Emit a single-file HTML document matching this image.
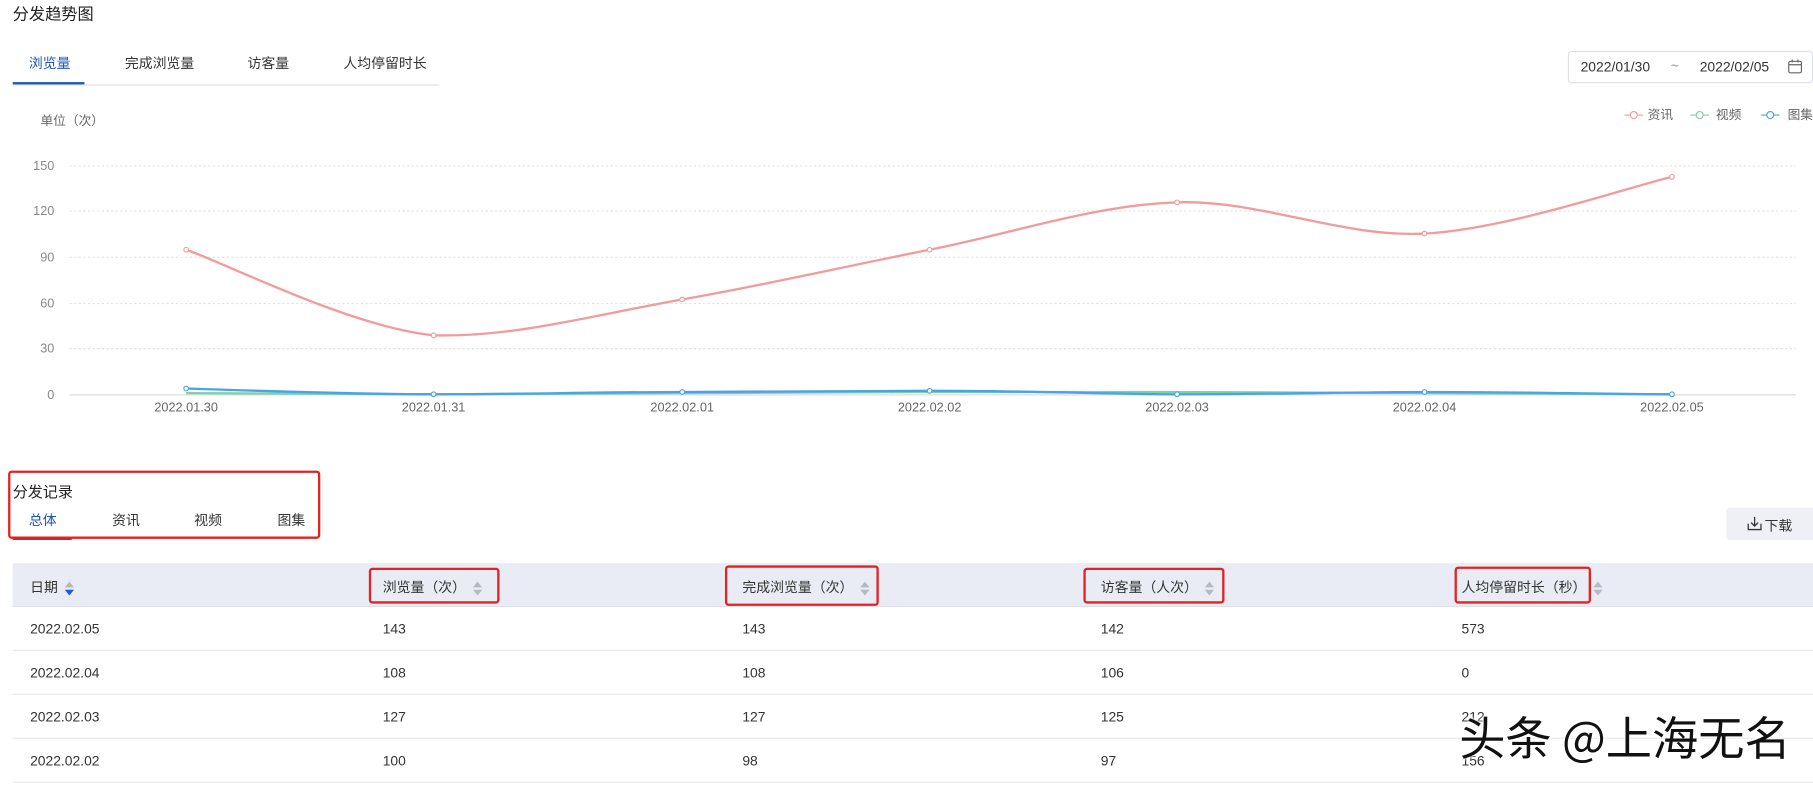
<!DOCTYPE html>
<html><head><meta charset="utf-8">
<style>
*{margin:0;padding:0;box-sizing:border-box}
html,body{width:1813px;height:786px;overflow:hidden;background:#fff}
body{font-family:"Liberation Sans","Noto Sans CJK SC",sans-serif;color:#333}
#w{position:absolute;left:0;top:0;width:1568px;height:680px;transform:scale(1.15625);transform-origin:0 0}
.a{position:absolute;white-space:nowrap}
.t{font-size:12px;color:#333}
.rb{position:absolute;border:2px solid #e52222;border-radius:3px}
.sort{display:inline-block;width:8px;height:12px;vertical-align:middle;margin-left:6px;position:relative}
.sort:before{content:"";position:absolute;left:0;top:0;border:4px solid transparent;border-bottom:5px solid #b5b9c2;border-top:0}
.sort:after{content:"";position:absolute;left:0;top:7px;border:4px solid transparent;border-top:5px solid #b5b9c2;border-bottom:0}
.sort.on:after{border-top-color:#1f5bd6}
.row{position:absolute;left:11px;width:1557px;height:38px;border-bottom:1px solid #e8e8e8}
.row span{position:absolute;top:12px;font-size:12px;color:#333}
</style></head><body>
<div id="w">
<div class="a" style="left:11px;top:2px;font-size:14px;color:#222">分发趋势图</div>
<div class="a t" style="left:25px;top:46px;color:#1f56b8">浏览量</div>
<div class="a t" style="left:108px;top:46px">完成浏览量</div>
<div class="a t" style="left:214px;top:46px">访客量</div>
<div class="a t" style="left:297px;top:46px">人均停留时长</div>
<div class="a" style="left:11px;top:73px;width:369px;height:1px;background:#dcdfe6"></div>
<div class="a" style="left:11px;top:71px;width:62px;height:2px;background:#1f56b8"></div>

<div class="a" style="left:1356px;top:44px;width:212px;height:28px;border:1px solid #dcdfe6;border-radius:3px"></div>
<div class="a t" style="left:1367px;top:51px">2022/01/30</div>
<div class="a" style="left:1445px;top:50px;font-size:12px;color:#999">~</div>
<div class="a t" style="left:1470px;top:51px">2022/02/05</div>
<svg class="a" style="left:1546px;top:51px" width="13" height="13" viewBox="0 0 13 13"><rect x="1" y="2" width="11" height="10" rx="1.5" fill="none" stroke="#666"/><line x1="1" y1="5" x2="12" y2="5" stroke="#666"/><line x1="4" y1="0.5" x2="4" y2="3" stroke="#666"/><line x1="9" y1="0.5" x2="9" y2="3" stroke="#666"/></svg>

<svg class="a" style="left:0;top:80px" width="1568" height="300" viewBox="0 80 1568 300">
<g stroke="#e3e3e3" stroke-dasharray="2,2" stroke-width="1">
<line x1="60" y1="143.5" x2="1553" y2="143.5"/><line x1="60" y1="182.5" x2="1553" y2="182.5"/><line x1="60" y1="222.5" x2="1553" y2="222.5"/><line x1="60" y1="262.5" x2="1553" y2="262.5"/><line x1="60" y1="301.5" x2="1553" y2="301.5"/>
</g>
<line x1="60" y1="341.5" x2="1553" y2="341.5" stroke="#ddd"/>
<g font-size="11" fill="#888" text-anchor="end" font-family="Liberation Sans,sans-serif">
<text x="47" y="147">150</text><text x="47" y="186">120</text><text x="47" y="226">90</text><text x="47" y="266">60</text><text x="47" y="305">30</text><text x="47" y="345">0</text>
</g>
<text x="35" y="108" font-size="11" fill="#666" font-family="Liberation Sans,Noto Sans CJK SC,sans-serif">单位（次）</text>
<g font-size="11" fill="#666" text-anchor="middle" font-family="Liberation Sans,sans-serif">
<text x="161" y="356">2022.01.30</text><text x="375" y="356">2022.01.31</text><text x="590" y="356">2022.02.01</text><text x="804" y="356">2022.02.02</text><text x="1018" y="356">2022.02.03</text><text x="1232" y="356">2022.02.04</text><text x="1446" y="356">2022.02.05</text>
</g>
<path d="M161,216 C196.7,228.3 303.5,282.8 375,290 C446,292 518.5,271.3 590,259 C661.5,246.7 732.5,230 804,216 C875.5,202 946.5,177.3 1018,175 C1089.5,172.7 1160.5,205.7 1232,202 C1303.5,198.3 1410,161.2 1446,153" fill="none" stroke="#f29b9b" stroke-width="2"/>
<polyline points="161,340 375,341 590,340 804,339 1018,339 1232,340 1446,341" fill="none" stroke="#7fd0ad" stroke-width="2"/>
<path d="M161,336 C220,338 320,341 375,341 C450,341 520,339 590,339 C680,338.5 760,338 804,338 C900,338 960,341 1018,341 C1100,341 1180,339 1232,339 C1320,339 1400,341 1446,341" fill="none" stroke="#4aa3e6" stroke-width="2"/>
<g fill="#fff" stroke="#f29b9b"><circle cx="161" cy="216" r="2"/><circle cx="375" cy="290" r="2"/><circle cx="590" cy="259" r="2"/><circle cx="804" cy="216" r="2"/><circle cx="1018" cy="175" r="2"/><circle cx="1232" cy="202" r="2"/><circle cx="1446" cy="153" r="2"/></g>
<g fill="#fff" stroke="#4aa3e6"><circle cx="161" cy="336" r="2"/><circle cx="375" cy="341" r="2"/><circle cx="590" cy="339" r="2"/><circle cx="804" cy="338" r="2"/><circle cx="1018" cy="341" r="2"/><circle cx="1232" cy="339" r="2"/><circle cx="1446" cy="341" r="2"/></g>
<g font-size="11" fill="#666" font-family="Liberation Sans,Noto Sans CJK SC,sans-serif">
<line x1="1405" y1="99.5" x2="1421" y2="99.5" stroke="#f29b9b"/><circle cx="1413" cy="99.5" r="3" fill="#fff" stroke="#f29b9b"/><text x="1425" y="103">资讯</text>
<line x1="1462" y1="99.5" x2="1478" y2="99.5" stroke="#7fd0ad"/><circle cx="1470" cy="99.5" r="3" fill="#fff" stroke="#7fd0ad"/><text x="1484" y="103">视频</text>
<line x1="1523" y1="99.5" x2="1539" y2="99.5" stroke="#4aa3e6"/><circle cx="1531" cy="99.5" r="3" fill="#fff" stroke="#4aa3e6"/><text x="1546" y="103">图集</text>
</g>
</svg>

<div class="a" style="left:11px;top:415px;font-size:13px;color:#222">分发记录</div>
<div class="a t" style="left:25px;top:441px;color:#1f56b8">总体</div>
<div class="a t" style="left:97px;top:441px">资讯</div>
<div class="a t" style="left:168px;top:441px">视频</div>
<div class="a t" style="left:240px;top:441px">图集</div>
<div class="a" style="left:11px;top:465px;width:51px;height:2px;background:#1f56b8"></div>
<div class="rb" style="left:7px;top:407px;width:270px;height:59px"></div>

<div class="a" style="left:1493px;top:439px;width:80px;height:28px;background:#eef0f5;border-radius:3px"></div>
<svg class="a" style="left:1511px;top:446px" width="13" height="13" viewBox="0 0 13 13"><path d="M1,7 V12 H12 V7 M6.5,1 V9 M3.5,6 L6.5,9 L9.5,6" fill="none" stroke="#333" stroke-width="1.1"/></svg>
<div class="a t" style="left:1526px;top:446px">下载</div>

<div class="a" style="left:11px;top:487px;width:1557px;height:38px;background:#e9ecf4;border-bottom:1px solid #dde1ea"></div>
<div class="a t" style="left:26px;top:499px">日期<span class="sort on"></span></div>
<div class="a t" style="left:331px;top:499px">浏览量（次）<span class="sort"></span></div>
<div class="a t" style="left:642px;top:499px">完成浏览量（次）<span class="sort"></span></div>
<div class="a t" style="left:952px;top:499px">访客量（人次）<span class="sort"></span></div>
<div class="a t" style="left:1264px;top:499px">人均停留时长（秒）<span class="sort"></span></div>
<div class="rb" style="left:319px;top:491px;width:113px;height:31px"></div>
<div class="rb" style="left:627px;top:489px;width:133px;height:35px"></div>
<div class="rb" style="left:937px;top:491px;width:122px;height:31px"></div>
<div class="rb" style="left:1258px;top:490px;width:118px;height:32px"></div>

<div class="row" style="top:525px"><span style="left:15px">2022.02.05</span><span style="left:320px">143</span><span style="left:631px">143</span><span style="left:941px">142</span><span style="left:1253px">573</span></div>
<div class="row" style="top:563px"><span style="left:15px">2022.02.04</span><span style="left:320px">108</span><span style="left:631px">108</span><span style="left:941px">106</span><span style="left:1253px">0</span></div>
<div class="row" style="top:601px"><span style="left:15px">2022.02.03</span><span style="left:320px">127</span><span style="left:631px">127</span><span style="left:941px">125</span><span style="left:1253px">212</span></div>
<div class="row" style="top:639px"><span style="left:15px">2022.02.02</span><span style="left:320px">100</span><span style="left:631px">98</span><span style="left:941px">97</span><span style="left:1253px">156</span></div>

<div class="a" style="left:1262px;top:610px;font-size:40px;line-height:52px;color:#111;font-family:'Noto Sans CJK SC',sans-serif;text-shadow:0 0 3px #fff,0 0 3px #fff">头条 @上海无名</div>
</div>
</body></html>
